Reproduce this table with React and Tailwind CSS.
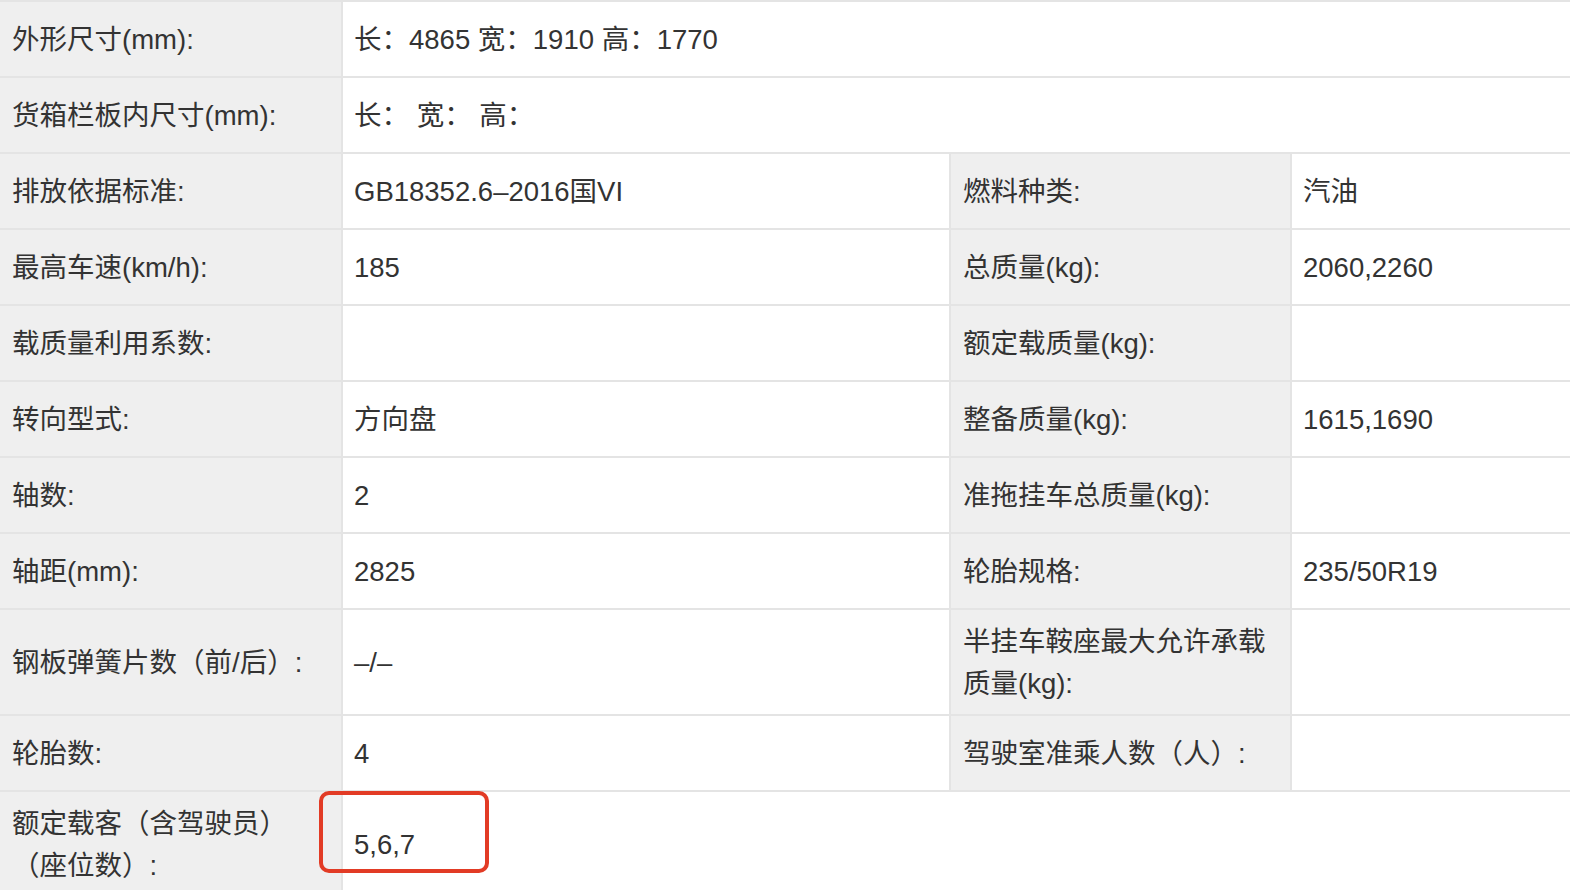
import React from "react";

const font = { fontFamily: '"Liberation Sans", "Noto Sans CJK SC", sans-serif' };

function L({ children, className = "" }) {
  return (
    <div className={"bg-[#efefef] flex items-center pl-[12px] pr-2 pt-[11px] pb-[9px] " + className}>
      <span className="leading-[42px]">{children}</span>
    </div>
  );
}
function V({ children, className = "" }) {
  return (
    <div className={"bg-white flex items-center pl-[11px] pr-2 pt-[11px] pb-[9px] " + className}>
      <span className="leading-[42px]">{children}</span>
    </div>
  );
}

export default function App() {
  return (
    <div className="w-[1570px] h-[890px] overflow-hidden bg-white text-[#333] text-[27.5px]" style={font}>
      <div className="relative grid grid-cols-[341px_606px_339px_1fr] gap-[2px] bg-[#e4e4e4] pt-[2px]">
        <L className="h-[74px]">外形尺寸(mm):</L>
        <V className="col-span-3">长：4865 宽：1910 高：1770</V>

        <L className="h-[74px]">货箱栏板内尺寸(mm):</L>
        <V className="col-span-3">长：&nbsp;宽：&nbsp;高：</V>

        <L className="h-[74px]">排放依据标准:</L>
        <V>GB18352.6–2016国VI</V>
        <L>燃料种类:</L>
        <V>汽油</V>

        <L className="h-[74px]">最高车速(km/h):</L>
        <V>185</V>
        <L>总质量(kg):</L>
        <V>2060,2260</V>

        <L className="h-[74px]">载质量利用系数:</L>
        <V></V>
        <L>额定载质量(kg):</L>
        <V></V>

        <L className="h-[74px]">转向型式:</L>
        <V>方向盘</V>
        <L>整备质量(kg):</L>
        <V>1615,1690</V>

        <L className="h-[74px]">轴数:</L>
        <V>2</V>
        <L>准拖挂车总质量(kg):</L>
        <V></V>

        <L className="h-[74px]">轴距(mm):</L>
        <V>2825</V>
        <L>轮胎规格:</L>
        <V>235/50R19</V>

        <L className="h-[104px]">钢板弹簧片数（前/后）:</L>
        <V>–/–</V>
        <L>半挂车鞍座最大允许承载<br />质量(kg):</L>
        <V></V>

        <L className="h-[74px]">轮胎数:</L>
        <V>4</V>
        <L>驾驶室准乘人数（人）:</L>
        <V></V>

        <L className="h-[104px]">额定载客（含驾驶员）<br />（座位数）:</L>
        <V className="col-span-3">5,6,7</V>

        <div className="absolute left-[319px] top-[791px] w-[170px] h-[82px] border-[4px] border-[#e23b25] rounded-[10px] pointer-events-none"></div>
      </div>
    </div>
  );
}
